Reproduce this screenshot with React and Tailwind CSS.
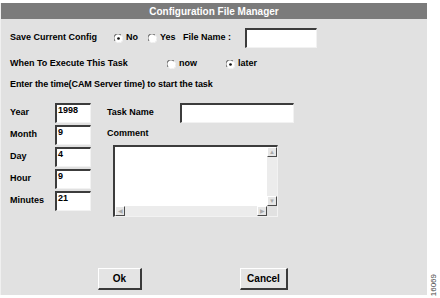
import React from 'react';

const Radio = ({ checked }) => (
  <svg width="9" height="9" viewBox="0 0 12 12" className="shrink-0">
    <circle cx="6" cy="6" r="5.2" fill="#fff" />
    <path d="M1.5 9 A5 5 0 0 1 9 1.5" fill="none" stroke="#6b6b6b" strokeWidth="1.4" />
    <path d="M10.5 3 A5 5 0 0 1 3 10.5" fill="none" stroke="#f4f4f4" strokeWidth="1.2" />
    {checked && <circle cx="6" cy="6" r="1.8" fill="#111" />}
  </svg>
);

const Field = ({ value, className = '' }) => (
  <div className={`h-[20px] bg-white border-t-2 border-l-2 border-t-[#3c3c3c] border-l-[#3c3c3c] border-b border-r border-b-[#f2f2f2] border-r-[#f2f2f2] px-[1px] leading-[10px] ${className}`}>
    {value}
  </div>
);

const Button = ({ children, className = '' }) => (
  <div className={`h-[22px] flex items-center justify-center bg-[#e4e4e4] border-t border-l border-t-white border-l-white border-b-2 border-r-2 border-b-[#3a3a3a] border-r-[#3a3a3a] ${className}`}>
    {children}
  </div>
);

const ScrollBtn = ({ children }) => (
  <div className="w-[10px] h-[10px] flex items-center justify-center bg-[#e6e6e6] border-t border-l border-t-white border-l-white border-b border-r border-b-[#4a4a4a] border-r-[#4a4a4a] text-[6px] leading-none font-normal text-[#aaa]">
    {children}
  </div>
);

export default function App() {
  const dates = [
    ['Year', '1998'],
    ['Month', '9'],
    ['Day', '4'],
    ['Hour', '9'],
    ['Minutes', '21'],
  ];

  return (
    <div className="w-[440px] h-[298px] bg-white flex text-black font-bold text-[9px] overflow-hidden" style={{ fontFamily: '"Liberation Sans", Arial, sans-serif' }}>
      <div className="w-[427px] mt-[3px] h-[292px] bg-[#e1e1e1] border-l border-l-[#f0f0f0] flex flex-col">
        {/* Title */}
        <div className="h-[16px] bg-[#7b7b7b] text-white text-[10px] flex items-center justify-center">
          Configuration File Manager
        </div>

        {/* Save config row */}
        <div className="flex items-center mt-[9px] h-[20px] pl-[9px]">
          <span className="w-[104px]">Save Current Config</span>
          <Radio checked />
          <span className="ml-[3px] w-[22px]">No</span>
          <Radio />
          <span className="ml-[3px] w-[23px]">Yes</span>
          <span className="w-[62px]">File Name :</span>
          <Field className="w-[72px]" />
        </div>

        {/* When row */}
        <div className="flex items-center mt-[9px] h-[14px] pl-[9px]">
          <span className="w-[157px]">When To Execute This Task</span>
          <Radio />
          <span className="ml-[3px] w-[47px]">now</span>
          <Radio checked />
          <span className="ml-[3px]">later</span>
        </div>

        <div className="mt-[7px] h-[14px] pl-[9px] flex items-center tracking-[-0.1px]">
          Enter the time(CAM Server time) to start the task
        </div>

        {/* Dates + task */}
        <div className="flex mt-[11px] pl-[9px]">
          <div className="flex flex-col gap-[2px]">
            {dates.map(([label, val]) => (
              <div key={label} className="flex items-center h-[20px]">
                <span className="w-[45px]">{label}</span>
                <Field value={val} className="w-[36px]" />
              </div>
            ))}
          </div>
          <div className="ml-[16px] flex flex-col">
            <div className="flex items-center h-[20px]">
              <span className="w-[73px]">Task Name</span>
              <Field className="w-[114px]" />
            </div>
            <div className="h-[14px] mt-[4px] flex items-center">Comment</div>
            <div className="ml-[6px] mt-[4px] w-[165px] h-[72px] bg-white border-t-2 border-l-2 border-t-[#3c3c3c] border-l-[#3c3c3c] border-b border-r border-b-[#f2f2f2] border-r-[#f2f2f2] flex flex-col">
              <div className="flex flex-1">
                <div className="flex-1" />
                <div className="w-[10px] bg-[#ececec] flex flex-col justify-between">
                  <ScrollBtn>▲</ScrollBtn>
                  <ScrollBtn>▼</ScrollBtn>
                </div>
              </div>
              <div className="h-[10px] flex">
                <div className="flex-1 bg-[#ececec] flex justify-between">
                  <ScrollBtn>◀</ScrollBtn>
                  <ScrollBtn>▶</ScrollBtn>
                </div>
                <div className="w-[10px] bg-[#e1e1e1]" />
              </div>
            </div>
          </div>
        </div>

        {/* Buttons */}
        <div className="flex mt-auto mb-[5px] pl-[97px]">
          <Button className="w-[44px] text-[10px]">Ok</Button>
          <Button className="ml-[98px] w-[48px] text-[10px]">Cancel</Button>
        </div>
      </div>
      <div className="flex-1 flex items-end justify-center pb-[2px]">
        <span className="text-[8px] font-normal text-[#444] [writing-mode:vertical-rl] rotate-180">16069</span>
      </div>
    </div>
  );
}
